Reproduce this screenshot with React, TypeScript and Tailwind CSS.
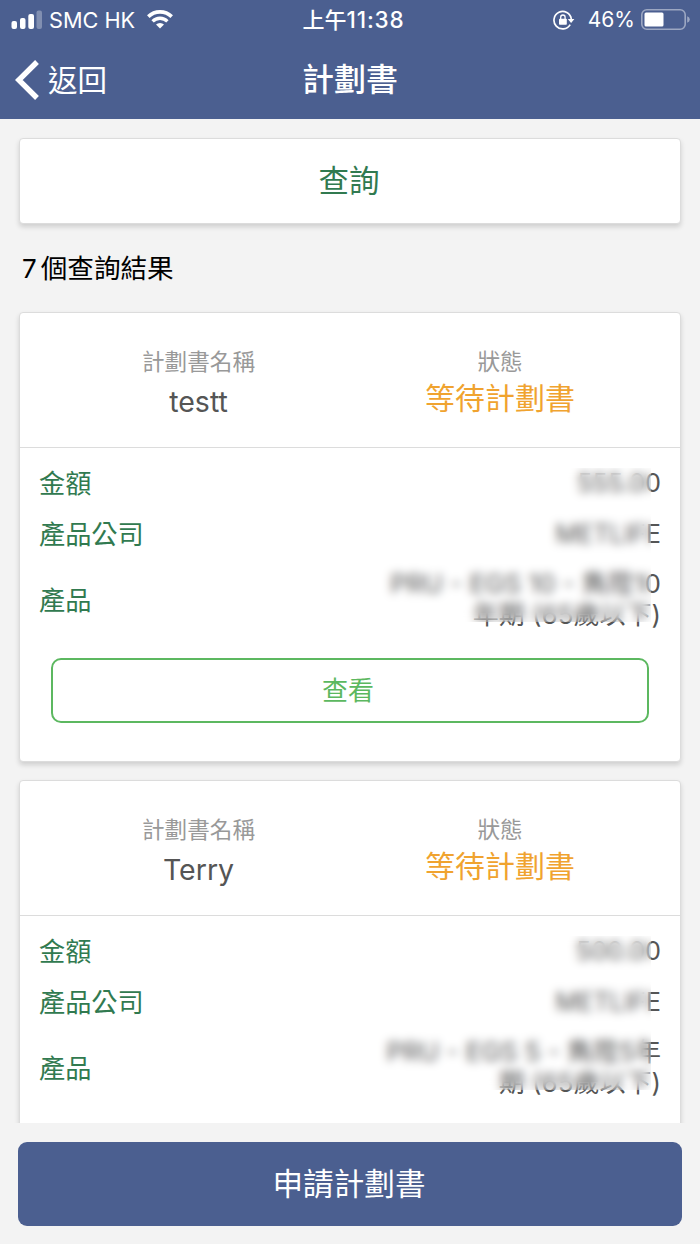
import React from 'react';

const proposals = [
  {
    name: 'testt',
    status: '等待計劃書',
    amount: '555.00',
    company: 'METLIFE',
    product: ['PRU - EGS 10 - 雋陞10', '年期 (65歲以下)'],
    viewable: true,
  },
  {
    name: 'Terry',
    status: '等待計劃書',
    amount: '500.00',
    company: 'METLIFE',
    product: ['PRU - EGS 5 - 雋陞5年', '期 (65歲以下)'],
    viewable: false,
  },
];

const cardClass = 'rounded-[4px] border border-[#dcdcdc] bg-white shadow-[0_3px_5px_rgba(0,0,0,0.15)]';

const StatusBar = () => (
  <div className="grid h-[39px] grid-cols-3 items-center text-[21px] leading-[38px]">
    <div className="flex items-center pl-[11px]">
      <svg width="32" height="20" viewBox="0 0 32 20" fill="white">
        <rect x="0.5" y="11" width="5.5" height="8" rx="2" />
        <rect x="9" y="8" width="5.5" height="11" rx="2" />
        <rect x="17.3" y="4" width="5.7" height="15" rx="2" />
        <rect x="25.5" y="0.5" width="5.5" height="18.5" rx="2" opacity="0.3" />
      </svg>
      <span className="ml-[6px] text-[21.7px] whitespace-nowrap">SMC HK</span>
      <svg className="ml-[12px]" width="26" height="19" viewBox="0 0 26 19" fill="none" stroke="white">
        <path d="M1.3 6.6a16.8 16.8 0 0 1 23.4 0" strokeWidth="3.6" />
        <path d="M5.6 11.3a10.5 10.5 0 0 1 14.8 0" strokeWidth="3.3" />
        <path d="M13 18.5l-4-4a5.8 5.8 0 0 1 8 0z" fill="white" stroke="none" />
      </svg>
    </div>
    <div className="pl-[7px] text-center text-[22px] font-medium whitespace-nowrap">
      上午<span className="text-[22.5px] tracking-[0.8px]">11:38</span>
    </div>
    <div className="flex items-center justify-end pr-[10px]">
      <svg width="22" height="20" viewBox="0 0 22 20" fill="none" stroke="white">
        <path d="M17.2 14.6a8.7 8.7 0 1 1 1.1-5.6" strokeWidth="1.7" />
        <path d="M14.8 9h6.6l-3.3 4z" fill="white" stroke="none" />
        <rect x="6" y="8.7" width="7.8" height="6" rx="0.8" fill="white" stroke="none" />
        <path d="M7.7 9V7.2a2.2 2.2 0 0 1 4.4 0V9" strokeWidth="1.3" />
      </svg>
      <span className="ml-[13px]">46%</span>
      <svg className="ml-[6px]" width="49" height="21" viewBox="0 0 49 21" fill="none">
        <rect x="0.8" y="0.8" width="43.4" height="19.4" rx="5" stroke="white" strokeOpacity="0.45" strokeWidth="1.6" />
        <rect x="3.5" y="3.5" width="19" height="14" rx="1.5" fill="white" />
        <path d="M46.2 7.3q2.6 1 2.6 3.2t-2.6 3.2z" fill="white" fillOpacity="0.45" />
      </svg>
    </div>
  </div>
);

const NavBar = () => (
  <div className="grid h-20 grid-cols-3 items-center pt-px">
    <div className="flex items-center pl-[15px]">
      <svg width="25" height="40" viewBox="0 0 25 40" fill="none" stroke="white" strokeWidth="5.4">
        <path d="M22 2L3.8 20L22 38" />
      </svg>
      <span className="ml-2 text-[29.5px] leading-10">返回</span>
    </div>
    <h1 className="text-center text-[32px] leading-10 font-medium">計劃書</h1>
  </div>
);

const Row = ({ label, children }: { label: string; children: React.ReactNode }) => (
  <div className="flex items-center justify-between px-[19px]">
    <span className="pt-px text-[26.2px] leading-[50px] text-[#317a50]">{label}</span>
    <span className="pb-[2px] text-right text-[25.3px] leading-[31px] text-[#555]">{children}</span>
  </div>
);

const ProposalCard = ({ proposal }: { proposal: (typeof proposals)[0] }) => (
  <div className={`relative h-[450px] shrink-0 ${cardClass}`}>
    <div className="grid h-[135px] grid-cols-[357px_246px] border-b border-[#dcdcdc] pt-[33px] text-center">
      <div>
        <div className="text-[22.6px] leading-8 text-[#999]">計劃書名稱</div>
        <div className="mt-1 text-[28.5px] leading-10 text-[#555]">{proposal.name}</div>
      </div>
      <div>
        <div className="text-[22.6px] leading-8 text-[#999]">狀態</div>
        <div className="text-[30px] leading-10 text-[#f0a32f]">{proposal.status}</div>
      </div>
    </div>
    <div className="pt-[10px]">
      <Row label="金額">{proposal.amount}</Row>
      <Row label="產品公司">{proposal.company}</Row>
      <div className="flex h-20 flex-col justify-center">
        <Row label="產品">
          <span className="text-[26px]">{proposal.product[0]}</span>
          <br />
          <span className="text-[26px]">{proposal.product[1]}</span>
        </Row>
      </div>
    </div>
    {proposal.viewable && (
      <div className="px-[31px] pt-[18px]">
        <button className="h-[65px] w-full rounded-[10px] border-2 border-[#5cb860] pr-1 text-[26px] text-[#5cb860]">
          查看
        </button>
      </div>
    )}
    {/* hides the private values */}
    <div className="absolute top-[155px] right-[29px] h-[154px] w-[290px] backdrop-blur-[5px]" />
  </div>
);

const App = () => (
  <div
    lang="zh-Hant"
    className="flex h-[1244px] w-[700px] flex-col overflow-hidden bg-[#f3f3f3] font-['Inter','Noto_Sans_CJK_TC',sans-serif] font-normal"
  >
    <header className="h-[119px] shrink-0 bg-[#4b5f90] text-white">
      <StatusBar />
      <NavBar />
    </header>
    <main className="flex h-[1004px] shrink-0 flex-col overflow-hidden px-[19px] pt-[19px]">
      <button className={`h-[86px] shrink-0 pr-[2px] text-[30.5px] text-[#317a50] ${cardClass}`}>查詢</button>
      <div className="h-[88px] shrink-0 pl-[3px] text-[26px] leading-[88px] text-black">
        7<span className="ml-[4px] text-[26.6px]">個查詢結果</span>
      </div>
      <div className="flex flex-col gap-[18px]">
        {proposals.map((proposal) => (
          <ProposalCard key={proposal.name} proposal={proposal} />
        ))}
      </div>
    </main>
    <footer className="px-[18px] pt-[19px]">
      <button className="h-[84px] w-full rounded-[9px] bg-[#4b5f90] pr-[2px] text-[30.6px] text-white">申請計劃書</button>
    </footer>
  </div>
);

export default App;
